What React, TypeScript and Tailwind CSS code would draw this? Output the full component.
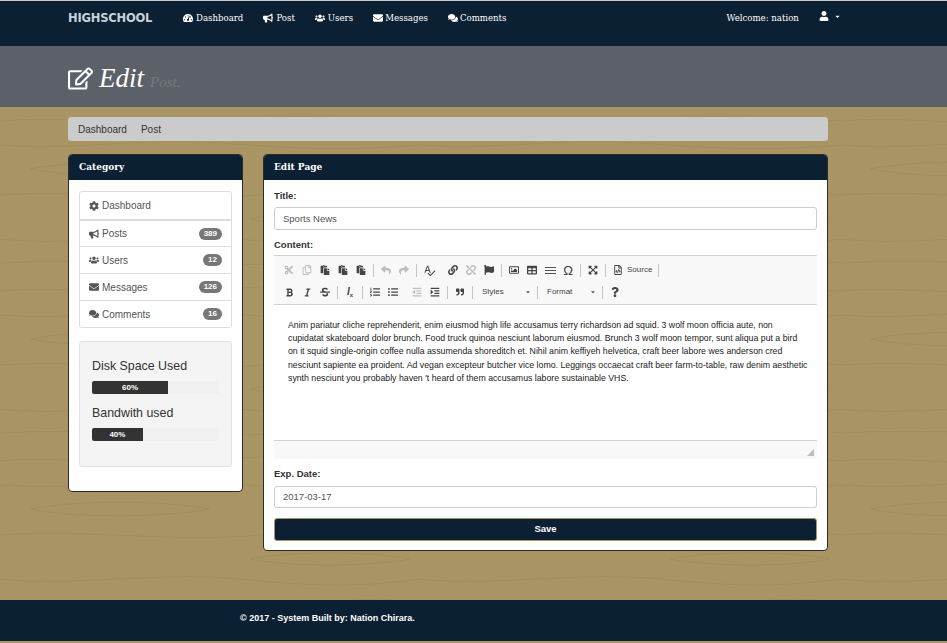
import React from 'react';
import {
  FaTachometerAlt, FaBullhorn, FaUsers, FaEnvelope, FaComments, FaUser, FaCog, FaRegEdit,
  FaCut, FaRegCopy, FaPaste, FaReply, FaShare, FaLink, FaUnlink, FaFlag, FaRegImage, FaTable,
  FaExpandArrowsAlt, FaRegFileCode, FaBold, FaItalic, FaStrikethrough, FaListOl, FaListUl,
  FaOutdent, FaIndent, FaQuoteRight, FaQuestion, FaCaretDown,
} from 'react-icons/fa';
import { MdSpellcheck } from 'react-icons/md';

const navLinks = [
  { label: 'Dashboard', icon: FaTachometerAlt, gap: 'gap-[3px]' },
  { label: 'Post', icon: FaBullhorn, gap: 'gap-[3px]' },
  { label: 'Users', icon: FaUsers, gap: 'gap-[3px]' },
  { label: 'Messages', icon: FaEnvelope, gap: 'gap-[2px]' },
  { label: 'Comments', icon: FaComments, gap: 'gap-[2px]' },
];

const sideLinks = [
  { label: 'Dashboard', icon: FaCog },
  { label: 'Posts', icon: FaBullhorn, count: 389 },
  { label: 'Users', icon: FaUsers, count: 12 },
  { label: 'Messages', icon: FaEnvelope, count: 126 },
  { label: 'Comments', icon: FaComments, count: 16 },
];

const editorLines = [
  'Anim pariatur cliche reprehenderit, enim eiusmod high life accusamus terry richardson ad squid. 3 wolf moon officia aute, non',
  'cupidatat skateboard dolor brunch. Food truck quinoa nesciunt laborum eiusmod. Brunch 3 wolf moon tempor, sunt aliqua put a bird',
  'on it squid single-origin coffee nulla assumenda shoreditch et. Nihil anim keffiyeh helvetica, craft beer labore wes anderson cred',
  'nesciunt sapiente ea proident. Ad vegan excepteur butcher vice lomo. Leggings occaecat craft beer farm-to-table, raw denim aesthetic',
  "synth nesciunt you probably haven 't heard of them accusamus labore sustainable VHS.",
];

// hand drawn grain, repeated by the svg pattern
function WoodGrain() {
  return (
    <svg className="absolute inset-0 w-full h-full" aria-hidden="true">
      <defs>
        <pattern id="grain" width="420" height="170" patternUnits="userSpaceOnUse">
          <g fill="none" stroke="#9f8b5b" strokeWidth="1" opacity="0.75">
            <path d="M0 14 C60 8 120 20 190 14 S330 8 420 14" />
            <path d="M0 38 C80 44 140 30 220 36 S350 44 420 38" />
            <path d="M30 62 C80 52 170 54 210 62 C170 70 80 72 30 62 Z" />
            <path d="M0 88 C90 82 170 96 260 88 S370 82 420 88" />
            <path d="M250 112 C290 104 370 104 410 112 C370 120 290 120 250 112 Z" />
            <path d="M0 132 C70 140 160 124 240 132 S360 140 420 132" />
            <path d="M0 156 C100 150 200 162 300 156 S380 152 420 156" />
          </g>
        </pattern>
      </defs>
      <rect width="100%" height="100%" fill="url(#grain)" />
    </svg>
  );
}

function Sep() {
  return <span className="w-px h-[13px] bg-[#c4c4c4] mx-[3px]" />;
}

function Tool({ children, faded }: { children: React.ReactNode; faded?: boolean }) {
  return (
    <span className={`w-[18px] h-[18px] flex items-center justify-center text-[10px] ${faded ? 'text-[#bdbdbd]' : 'text-[#444]'}`}>
      {children}
    </span>
  );
}

function Combo({ label, width }: { label: string; width: string }) {
  return (
    <span className={`${width} flex items-center justify-between pl-[6px] pr-[3px] text-[8px] text-[#444]`}>
      {label}
      <FaCaretDown className="text-[6px] text-[#555]" />
    </span>
  );
}

function Bar({ label, value, width }: { label: string; value: number; width: string }) {
  return (
    <div>
      <div className="text-[12.4px] leading-[15px] text-[#333]">{label}</div>
      <div className="mt-[7px] h-[13px] bg-[#f0f0f0] rounded-[2px] overflow-hidden">
        <div className={`${width} h-full bg-[#333] text-white text-[8px] font-bold leading-[13px] text-center`}>{value}%</div>
      </div>
    </div>
  );
}

function Panel({ title, width, children }: { title: string; width: string; children: React.ReactNode }) {
  return (
    <section className={`${width} bg-white rounded-[4px] border border-[#2b2b2b] overflow-hidden self-start`}>
      <h2 className="h-[25px] bg-[#0c2033] text-white text-[9px] font-bold leading-[25px] px-[10px] font-['DejaVu_Serif',serif]">{title}</h2>
      {children}
    </section>
  );
}

export default function App() {
  return (
    <div className="w-[947px] h-[643px] overflow-hidden flex flex-col bg-[#a99563] border-t border-[#c8c8c8] font-['Liberation_Sans',Arial,sans-serif]">
      {/* Top nav */}
      <nav className="h-[45px] shrink-0 bg-[#0c2033] flex items-start pl-[68px] pt-[10px] text-white font-['DejaVu_Serif',serif] text-[8.6px] leading-[14px]">
        <span className="w-[115px] font-['DejaVu_Sans',sans-serif] font-bold text-[11.5px] tracking-[-0.2px] text-[#c6d2da]">HIGHSCHOOL</span>
        <div className="flex gap-[20px]">
          {navLinks.map((l) => (
            <span key={l.label} className={`flex items-center ${l.gap}`}>
              <l.icon className="text-[10px]" />
              {l.label}
            </span>
          ))}
        </div>
        <span className="ml-[220px]">Welcome: nation</span>
        <span className="ml-[20px] flex items-center gap-[5px]">
          <FaUser className="text-[10px]" />
          <FaCaretDown className="text-[7px]" />
        </span>
      </nav>

      {/* Page heading */}
      <header className="h-[61px] shrink-0 bg-[#5c6068] flex items-center pl-[68px] pt-[4px]">
        <FaRegEdit className="text-white text-[25px]" />
        <span className="ml-[6px] text-white text-[27px] leading-none italic font-['Liberation_Serif',serif]">Edit</span>
        <span className="ml-[6px] mt-[8px] text-[#767a80] text-[15px] leading-none italic font-['Liberation_Serif',serif]">Post.</span>
      </header>

      <main className="relative flex-1 pl-[68px] pt-[10px]">
        <WoodGrain />
        <div className="relative w-[760px]">
          {/* Breadcrumb */}
          <div className="h-[24px] bg-[#cbcbcb] rounded-[3px] flex items-center gap-[14px] px-[10px] text-[10px] text-[#333]">
            <span>Dashboard</span>
            <span>Post</span>
          </div>

          <div className="flex gap-[20px] mt-[13px]">
            {/* Sidebar */}
            <Panel title="Category" width="w-[175px]">
              <div className="px-[10px] pt-[11px] pb-[24px]">
                <ul className="border border-[#ddd] rounded-[3px] text-[10px] text-[#555]">
                  {sideLinks.map((s, i) => (
                    <li key={s.label} className={`h-[27px] flex items-center px-[9px] ${i > 0 ? 'border-t border-[#ddd]' : ''} ${i === 1 ? 'border-t-2' : ''}`}>
                      <s.icon className="text-[10px] mr-[3px]" />
                      <span className="flex-1">{s.label}</span>
                      {s.count && (
                        <span className="h-[12px] min-w-[19px] px-[5px] rounded-full bg-[#777] text-white text-[8px] font-bold leading-[12px] text-center">{s.count}</span>
                      )}
                    </li>
                  ))}
                </ul>
                <div className="mt-[13px] h-[126px] bg-[#f4f4f4] border border-[#e3e3e3] rounded-[3px] px-[12px] pt-[17px] flex flex-col gap-[12px]">
                  <Bar label="Disk Space Used" value={60} width="w-[60%]" />
                  <Bar label="Bandwith used" value={40} width="w-[40%]" />
                </div>
              </div>
            </Panel>

            {/* Edit form */}
            <Panel title="Edit Page" width="w-[565px]">
              <form className="px-[10px] pt-[10px] pb-[9px] text-[#333]">
                <label className="block text-[9.5px] font-bold leading-[12px]">Title:</label>
                <div className="mt-[5px] h-[23px] border border-[#ccc] rounded-[3px] px-[8px] text-[9.5px] leading-[21px] text-[#555]">Sports News</div>

                <label className="block mt-[9px] text-[9.5px] font-bold leading-[12px]">Content:</label>
                <div className="mt-[4px]">
                  <div className="h-[50px] bg-[#f8f8f8] border-y border-[#d1d1d1] pl-[6px] pt-[4px]">
                    <div className="flex items-center h-[20px]">
                      <Tool faded><FaCut /></Tool>
                      <Tool faded><FaRegCopy /></Tool>
                      <Tool><FaPaste /></Tool>
                      <Tool><FaPaste /></Tool>
                      <Tool><FaPaste /></Tool>
                      <Sep />
                      <Tool faded><FaReply /></Tool>
                      <Tool faded><FaShare /></Tool>
                      <Sep />
                      <Tool><MdSpellcheck className="text-[13px]" /></Tool>
                      <span className="w-[6px]" />
                      <Tool><FaLink /></Tool>
                      <Tool faded><FaUnlink /></Tool>
                      <Tool><FaFlag /></Tool>
                      <Sep />
                      <Tool><FaRegImage /></Tool>
                      <Tool><FaTable /></Tool>
                      <Tool><span className="w-[11px] h-[7px] border-y border-[#555] flex items-center"><span className="w-full h-px bg-[#555]" /></span></Tool>
                      <Tool><span className="text-[13px] leading-none">Ω</span></Tool>
                      <Sep />
                      <Tool><FaExpandArrowsAlt /></Tool>
                      <Sep />
                      <Tool><FaRegFileCode /></Tool>
                      <span className="text-[8px] text-[#444] pr-[3px]">Source</span>
                      <Sep />
                    </div>
                    <div className="flex items-center h-[20px] mt-[2px]">
                      <Tool><FaBold className="text-[9px]" /></Tool>
                      <Tool><FaItalic className="text-[9px]" /></Tool>
                      <Tool><FaStrikethrough /></Tool>
                      <Sep />
                      <Tool><span className="text-[10px] italic font-bold leading-none">I<sub className="text-[6px] not-italic">x</sub></span></Tool>
                      <Sep />
                      <Tool><FaListOl /></Tool>
                      <Tool><FaListUl /></Tool>
                      <span className="w-[6px]" />
                      <Tool faded><FaOutdent /></Tool>
                      <Tool><FaIndent /></Tool>
                      <Sep />
                      <Tool><FaQuoteRight className="text-[8px]" /></Tool>
                      <Sep />
                      <Combo label="Styles" width="w-[58px]" />
                      <Sep />
                      <Combo label="Format" width="w-[58px]" />
                      <Sep />
                      <Tool><FaQuestion /></Tool>
                    </div>
                  </div>
                  <div className="h-[135px] pl-[14px] pt-[14px] text-[8.75px] leading-[13.2px] text-[#222]">
                    {editorLines.map((line) => (
                      <div key={line} className="whitespace-nowrap">{line}</div>
                    ))}
                  </div>
                  <div className="relative h-[19px] bg-[#f8f8f8] border-t border-[#d1d1d1]">
                    <span className="absolute right-[3px] bottom-[3px] w-0 h-0 border-l-[7px] border-b-[7px] border-l-transparent border-b-[#bdbdbd]" />
                  </div>
                </div>

                <label className="block mt-[9px] text-[9.5px] font-bold leading-[12px]">Exp. Date:</label>
                <div className="mt-[6px] h-[22px] border border-[#ccc] rounded-[3px] px-[8px] text-[9.5px] leading-[20px] text-[#555]">2017-03-17</div>
                <button type="button" className="block w-full mt-[10px] h-[23px] bg-[#0c2033] border border-[#a99563] rounded-[3px] text-white text-[9.5px] font-bold">Save</button>
              </form>
            </Panel>
          </div>
        </div>
      </main>

      <footer className="h-[41px] shrink-0 mb-[2px] bg-[#0c2033] pl-[240px] pt-[12px] text-white text-[9px] font-bold leading-[12px]">
        © 2017 - System Built by: Nation Chirara.
      </footer>
    </div>
  );
}
